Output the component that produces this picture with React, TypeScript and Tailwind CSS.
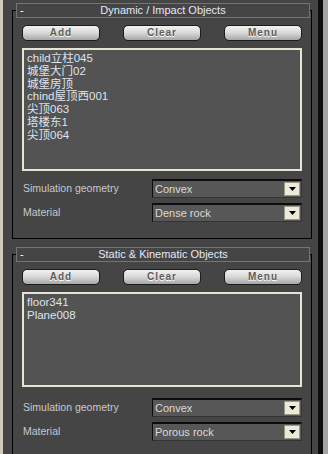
const FONT = "font-['Liberation_Sans','Noto_Sans_CJK_SC',sans-serif]";

const PANELS = [
  {
    title: "Dynamic / Impact Objects",
    items: ["child立柱045", "城堡大门02", "城堡房顶", "chind屋顶西001", "尖顶063", "塔楼东1", "尖顶064"],
    material: "Dense rock",
    listH: "h-[123px]",
    rowsTop: "mt-[8px]",
    last: false,
  },
  {
    title: "Static & Kinematic Objects",
    items: ["floor341", "Plane008"],
    material: "Porous rock",
    listH: "h-[95px]",
    rowsTop: "mt-[11px]",
    last: true,
  },
];

function Btn({ label }: { label: string }) {
  return (
    <div className="w-[78px] h-[16px] rounded-[5px] border border-[#1c1c1c] bg-linear-to-b from-[#f2f2f2] via-[#d8d8d8] to-[#a6a6a6] flex items-center justify-center">
      <span className="text-[10px] font-bold tracking-[1px] text-[#5c5c5c] [text-shadow:0_1px_0_#ffffff] leading-none">
        {label}
      </span>
    </div>
  );
}

function Dropdown({ value }: { value: string }) {
  return (
    <div className="w-[150px] h-[19px] bg-[#575757] border-t-2 border-t-[#0c0c0c] border-l border-l-[#0c0c0c] border-b border-b-[#343434] border-r border-r-[#343434] flex items-center justify-between">
      <span className="pl-[2px] text-[11px] text-[#dadada] leading-none">{value}</span>
      <div className="mr-[1px] w-[16px] h-[14px] bg-[#ecead8] border border-[#9a9888] flex items-center justify-center">
        <svg width="7" height="4" viewBox="0 0 7 4">
          <polygon points="0,0 7,0 3.5,4" fill="#000" />
        </svg>
      </div>
    </div>
  );
}

function Row({ label, value, top }: { label: string; value: string; top: string }) {
  return (
    <div className={`${top} flex items-center pl-[10px]`}>
      <span className="w-[129px] text-[10.5px] text-[#c6c9d0] leading-none">{label}</span>
      <Dropdown value={value} />
    </div>
  );
}

function Rollout({ p }: { p: (typeof PANELS)[number] }) {
  return (
    <div
      className={`ml-[9px] w-[300px] border border-black ${
        p.last ? "mt-[15px] border-b-0 flex-1" : "mt-[10px] pb-[16px]"
      }`}
    >
      {/* rollout header sits over the top border */}
      <div className="relative -mt-[8px] ml-[3px] w-[294px] h-[15px] border border-[#747474] bg-[#454545] grid grid-cols-[20px_1fr_20px] items-center">
        <span className="pl-[3px] text-[11px] text-white leading-none">-</span>
        <span className="text-center text-[11px] text-[#e4e8f8] leading-none">{p.title}</span>
        <span />
      </div>

      <div className="mt-[7px] pl-[9px] flex gap-[23px]">
        <Btn label="Add" />
        <Btn label="Clear" />
        <Btn label="Menu" />
      </div>

      <div className={`mt-[7px] ml-[9px] w-[280px] ${p.listH} border-2 border-[#e6e5d4] bg-[#535353] pt-[2px] pl-[3px]`}>
        {p.items.map((it, i) => (
          <div key={i} className="text-[11.5px] leading-[12.8px] text-[#dfe2ee] whitespace-nowrap">
            {it}
          </div>
        ))}
      </div>

      <Row label="Simulation geometry" value="Convex" top={p.rowsTop} />
      <Row label="Material" value={p.material} top="mt-[5px]" />
    </div>
  );
}

export default function App() {
  return (
    <div className={`${FONT} w-[328px] h-[454px] overflow-hidden flex bg-[#454545]`}>
      <div className="w-[3px] bg-[#cfcbbc]" />
      <div className="w-[315px] flex flex-col">
        {PANELS.map((p, i) => (
          <Rollout key={i} p={p} />
        ))}
      </div>
      <div className="w-[5px] bg-[#0e0e0e]" />
      <div className="w-[5px] bg-[#a4a4a4]" />
    </div>
  );
}
